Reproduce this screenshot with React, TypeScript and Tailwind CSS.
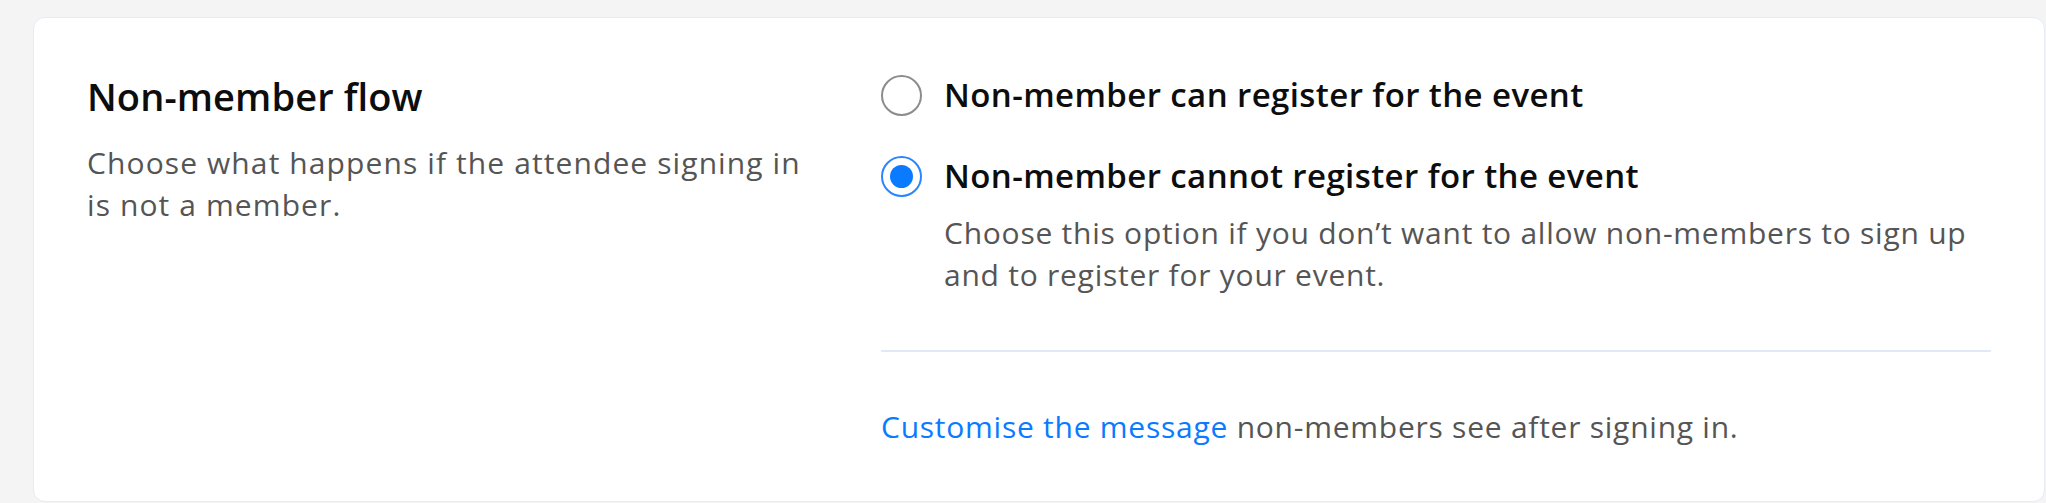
import { useState } from 'react';

const options = [
    { id: 'can', label: 'Non-member can register for the event' },
    {
        id: 'cannot',
        label: 'Non-member cannot register for the event',
        description: 'Choose this option if you don\u2019t want to allow non-members to sign up and to register for your event.',
    },
];

function Radio({ checked }: { checked: boolean }) {
    if (checked) {
        return (
            <span className="flex items-center justify-center w-[41px] h-[41px] shrink-0 rounded-full border-2 border-[#2a86ff] bg-white">
                <span className="w-[23px] h-[23px] rounded-full bg-[#0a7bff]" />
            </span>
        );
    }
    return <span className="block w-[41px] h-[41px] shrink-0 rounded-full border-2 border-[#8c8c8c] bg-white" />;
}

export default function App() {
    const [selected, setSelected] = useState('cannot');

    return (
        <div className="min-h-[503px] bg-[#f4f4f4] pl-[33px] pt-[17px] pr-px pb-px font-['Open_Sans',sans-serif]">
            <div className="flex bg-white border border-[#e6ebf8] rounded-[12px] p-[53px] min-h-[485px]">
                <div className="w-[730px] shrink-0 pr-[4px]">
                    <h2 className="text-[38px] leading-[55px] font-semibold tracking-[0.1px] text-[#0d0d0d] -mt-[2px]">Non-member flow</h2>
                    <p className="mt-[18px] text-[30px] leading-[42px] tracking-[1.1px] text-[#555]">
                        Choose what happens if the attendee signing in is not a member.
                    </p>
                </div>

                <div className="ml-[64px] flex-1">
                    <div className="flex flex-col gap-[33px]">
                        {options.map((opt) => (
                            <div key={opt.id} className="cursor-pointer" onClick={() => setSelected(opt.id)}>
                                <div className="flex items-center gap-[22px]">
                                    <Radio checked={selected === opt.id} />
                                    <span className="text-[33px] leading-[48px] font-semibold tracking-[0.4px] text-[#0d0d0d]">{opt.label}</span>
                                </div>
                                {opt.description && (
                                    <p className="mt-3 ml-[63px] text-[30px] leading-[42px] tracking-[0.75px] text-[#555]">{opt.description}</p>
                                )}
                            </div>
                        ))}
                    </div>

                    <div className="mt-[54px] border-t-2 border-[#e2e9f6]" />

                    <p className="mt-[54px] text-[30px] leading-[42px] tracking-[0.75px] text-[#555]">
                        <a href="#" className="text-[#0a7bff]">Customise the message</a> non-members see after signing in.
                    </p>
                </div>
            </div>
        </div>
    );
}
